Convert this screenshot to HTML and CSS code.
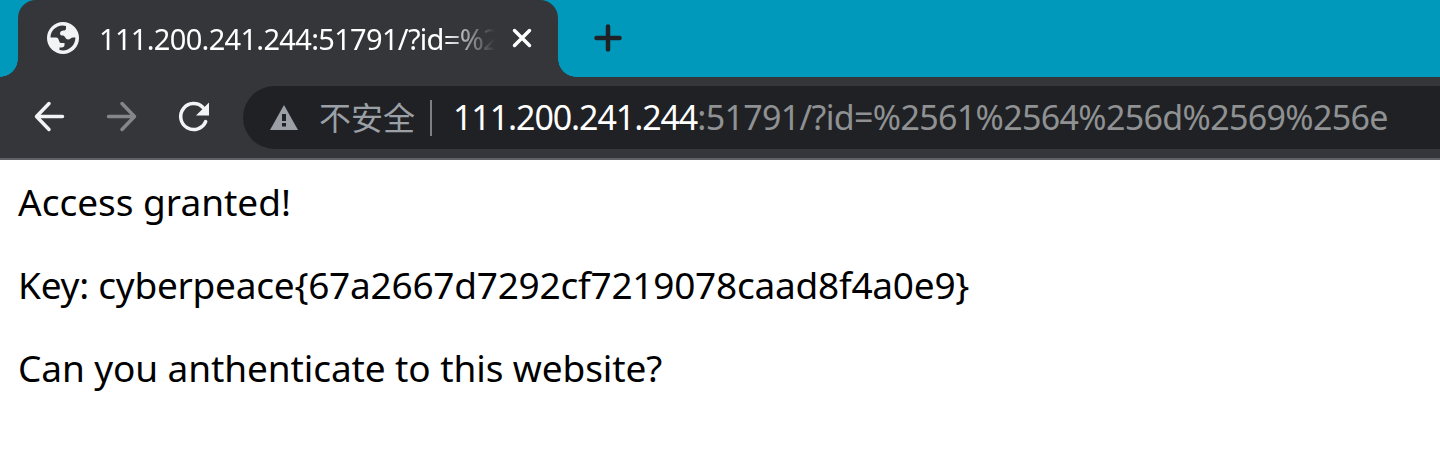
FILE: index.html
```html
<!DOCTYPE html>
<html lang="zh-CN">
<head>
<meta charset="utf-8">
<title>111.200.241.244:51791</title>
<link rel="stylesheet" href="styles.css">
</head>
<body>
<header class="tabstrip">
  <div class="tab">
    <svg class="favicon" viewBox="0 0 32 32" width="32" height="32"><circle cx="16" cy="16" r="16" fill="#f1f3f4"/><path d="M3.500 15.500C3.500 9 9 3.800 15.500 3.600L19 4V6.500C19 8 18 8.500 16.500 8.500C14.500 8.500 13 9.500 13 11.500C13 13 14 13.500 16 13.500C18 13.500 18.500 17.500 21 17.500C23.500 17.500 24 15.500 26 15.500H28.400C28.400 23 22.500 28.400 16 28.400L12.500 28V25.500H14.500C16.500 25.500 17.500 24.500 17.500 23V21H14C11.500 21 12.500 15.500 9 15.500Z" fill="#35363a"/></svg>
    <span class="tab-title">111.200.241.244:51791/?id=%2</span>
    <svg class="close" viewBox="0 0 20 20" width="20" height="20"><path d="M2.500 2.500l15 15M17.500 2.500l-15 15"/></svg>
  </div>
  <svg class="plus" viewBox="0 0 28 28" width="28" height="28"><path d="M14 2.500v23M2.500 14h23"/></svg>
</header>
<nav class="toolbar">
  <svg class="nav-icon" viewBox="0 0 32 32" width="32" height="32"><path d="M29.500 15.500H4M16 2.500L3.500 15.500 16 28.500"/></svg>
  <svg class="nav-icon dim" viewBox="0 0 32 32" width="32" height="32"><path d="M3.500 15.500h25M17 2.500L29.500 15.500 17 28.500"/></svg>
  <svg class="nav-icon reload" viewBox="0 0 32 32" width="32" height="32"><path d="M28.700 20.500A13 13 0 1 1 26 6.500"/><path class="head" d="M32 1.500v13H19z"/></svg>
  <div class="omnibox">
    <svg class="warning" viewBox="0 0 28 25" width="28" height="25"><path d="M14 0l14 25H0z"/><path class="mark" d="M12 9h4v7h-4zM12 18h4v3.500h-4z"/></svg>
    <span class="security">不安全</span>
    <span class="divider"></span>
    <span class="url"><span class="host">111.200.241.244</span><span class="path">:51791/?id=%2561%2564%256d%2569%256e</span></span>
  </div>
</nav>
<main class="page">
  <p class="greeting">Access granted!</p>
  <p class="key">Key: cyberpeace{67a2667d7292cf7219078caad8f4a0e9}</p>
  <p class="question">Can you anthenticate to this website?</p>
</main>
</body>
</html>
```
FILE: styles.css
```css
* { box-sizing: border-box; }
body { margin: 0; background: #fff; font-family: "Noto Sans", "Noto Sans CJK SC", sans-serif; overflow: hidden; white-space: nowrap; }
svg { flex: none; display: block; }
.tabstrip { height: 77px; background: #0099bc; display: flex; padding-left: 18px; }
.tab { position: relative; width: 540px; height: 77px; background: #35363a; border-radius: 18px 18px 0 0; display: flex; padding-left: 29px; }
.tab::before, .tab::after { content: ""; position: absolute; bottom: 0; width: 18px; height: 18px; }
.tab::before { left: -18px; background: radial-gradient(circle at 0 0, transparent 17.5px, #35363a 18px); }
.tab::after { right: -18px; background: radial-gradient(circle at 100% 0, transparent 17.5px, #35363a 18px); }
.favicon { margin-top: 22px; }
.tab-title { margin-left: 20px; width: 396px; color: #fff; font-size: 29px; line-height: 78px; letter-spacing: -0.68px; -webkit-mask-image: linear-gradient(90deg, #000 345px, transparent 396px); mask-image: linear-gradient(90deg, #000 345px, transparent 396px); }
.close { margin: 28px 0 0 17px; fill: none; stroke: #fff; stroke-width: 3.5; stroke-linecap: round; }
.plus { margin: 24px 0 0 36px; fill: none; stroke: #202124; stroke-width: 4.5; stroke-linecap: round; }
.toolbar { height: 83px; background: #35363a; border-bottom: 2px solid #606166; display: flex; padding-left: 33px; }
.nav-icon { margin: 24px 40px 0 0; fill: none; stroke: #f1f3f4; stroke-width: 3.5; stroke-linecap: round; stroke-linejoin: round; }
.dim { stroke: #85868a; }
.reload { margin-right: 34px; }
.head { fill: #f1f3f4; stroke: none; }
.omnibox { flex: 1; height: 63px; margin-top: 9px; background: #202124; border-radius: 32px 0 0 32px; display: flex; padding-left: 27px; line-height: 63px; }
.warning { margin-top: 19px; fill: #9aa0a6; }
.mark { fill: #202124; }
.security { margin-left: 21px; width: 95px; color: #9aa0a6; font-family: "Noto Sans CJK SC", sans-serif; font-size: 32px; line-height: 61px; }
.divider { width: 2px; height: 36px; margin: 14px 21px 0 16px; background: #7d7f82; }
.url { font-size: 34px; letter-spacing: -1.1px; }
.host { color: #fff; }
.path { color: #8f9193; letter-spacing: -0.66px; }
.page { padding-left: 18px; color: #000; }
.page p { margin: 0; font-size: 37px; line-height: 83px; }
.page .key { letter-spacing: -0.24px; }
.page .question { letter-spacing: -0.1px; }
```
